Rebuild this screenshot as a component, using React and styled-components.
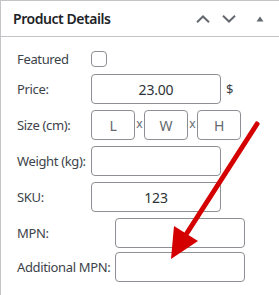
import React from "react";
import styled, { createGlobalStyle } from "styled-components";

const GlobalStyle = createGlobalStyle`
    html, body {
        margin: 0;
        padding: 0;
        background: #fff;
    }
    body {
        font-family: "Noto Sans", "Open Sans", sans-serif;
    }
`

const Page = styled.div`
    position: relative;
    width: 279px;
    height: 295px;
    overflow: hidden;
`

const Panel = styled.section`
    border-top: 1px solid #c3c4c7;
    border-left: 1px solid #c3c4c7;
    height: 100%;
    box-sizing: border-box;
`

const Header = styled.div`
    display: flex;
    align-items: center;
    height: 35px;
    padding-left: 12px;
    border-bottom: 1px solid #c3c4c7;

    h2 {
        flex: 1;
        margin: 0;
        font-size: 14px;
        font-weight: 600;
        letter-spacing: -0.45px;
        color: #1d2327;
    }
`

const Handles = styled.div`
    display: flex;
    align-items: center;
    padding-right: 15px;
    gap: 12px;
    color: #646970;

    svg {
        display: block;
    }
`

const Body = styled.div`
    padding: 13px 0 0 16px;
`

const FieldTable = styled.div`
    display: grid;
    grid-template-columns: ${p => p.$label}px auto;
    row-gap: ${p => p.$gap}px;
    align-items: center;
    margin-bottom: ${p => p.$after || 0}px;
`

const Label = styled.label`
    font-size: 13px;
    letter-spacing: -0.35px;
    color: #3c434a;
    white-space: nowrap;
`

const Input = styled.input`
    box-sizing: border-box;
    width: ${p => p.$w || 130}px;
    height: 30px;
    border: 1px solid #8c8f94;
    border-radius: 4px;
    background: #fff;
    padding: 0 6px;
    font-family: "Noto Sans", "Open Sans", sans-serif;
    font-size: 14px;
    letter-spacing: -0.2px;
    color: #2c3338;
    text-align: center;
    outline: none;

    &::placeholder {
        color: #646970;
    }
`

const Check = styled.span`
    display: block;
    width: 16px;
    height: 16px;
    box-sizing: border-box;
    border: 1px solid #8c8f94;
    border-radius: 4px;
`

const Inline = styled.div`
    display: flex;
    align-items: center;
`

const Suffix = styled.span`
    font-size: 13px;
    color: #3c434a;
    margin-left: 5px;
`

const Times = styled.span`
    width: 9px;
    text-align: center;
    font-size: 12px;
    color: #646970;
    line-height: 1;
    margin-top: -3px;
`

const Overlay = styled.svg`
    position: absolute;
    left: 0;
    top: 0;
    pointer-events: none;
`

const App = () => (
    <Page>
        <GlobalStyle />
        <Panel>
            <Header>
                <h2>Product Details</h2>
                <Handles>
                    <svg width="14" height="8" viewBox="0 0 14 8">
                        <path d="M1 7.2 L7 1.5 L13 7.2" fill="none" stroke="currentColor" strokeWidth="2" />
                    </svg>
                    <svg width="14" height="8" viewBox="0 0 14 8">
                        <path d="M1 0.8 L7 6.5 L13 0.8" fill="none" stroke="currentColor" strokeWidth="2" />
                    </svg>
                    <svg width="8" height="6" viewBox="0 0 8 6" style={{ marginLeft: 8 }}>
                        <path d="M4 0.5 L7.5 5.5 L0.5 5.5 Z" fill="currentColor" />
                    </svg>
                </Handles>
            </Header>
            <Body>
                <FieldTable $label={74} $gap={6} $after={6}>
                    <Label>Featured</Label>
                    <Check />
                    <Label>Price:</Label>
                    <Inline>
                        <Input defaultValue="23.00" />
                        <Suffix>$</Suffix>
                    </Inline>
                    <Label>Size (cm):</Label>
                    <Inline>
                        <Input $w={44} placeholder="L" />
                        <Times>x</Times>
                        <Input $w={44} placeholder="W" />
                        <Times>x</Times>
                        <Input $w={44} placeholder="H" />
                    </Inline>
                    <Label>Weight (kg):</Label>
                    <Input />
                    <Label>SKU:</Label>
                    <Input defaultValue="123" />
                </FieldTable>
                <FieldTable $label={98} $gap={4}>
                    <Label>MPN:</Label>
                    <Input />
                    <Label>Additional MPN:</Label>
                    <Input />
                </FieldTable>
            </Body>
        </Panel>
        <Overlay width="279" height="295" viewBox="0 0 279 295">
            <line x1="257" y1="124" x2="187" y2="233" stroke="#d40000" strokeWidth="5" strokeLinecap="round" />
            <polygon points="174,226 198,241 171,259" fill="#d40000" />
        </Overlay>
    </Page>
)

export default App;
